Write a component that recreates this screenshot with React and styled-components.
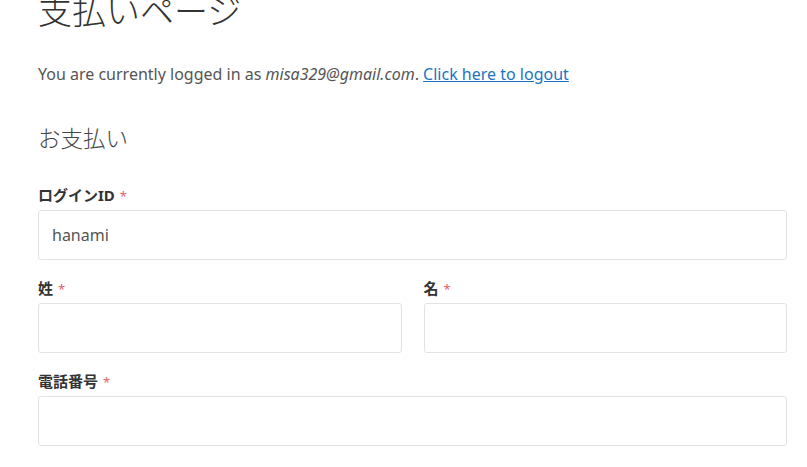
import React from 'react';
import styled, { createGlobalStyle } from 'styled-components';

const GlobalStyle = createGlobalStyle`
	html, body {
		margin: 0;
		padding: 0;
		background: #fff;
	}
	body {
		font-family: 'Noto Sans', 'Noto Sans CJK JP', sans-serif;
		color: #444;
	}
`;

const Page = styled.main`
	width: 749px;
	padding: 0 20px 0 38px;
	overflow: hidden;
	height: 467px;
`;

const Title = styled.h1`
	margin: -12px 0 0;
	font-family: 'Noto Sans CJK JP', sans-serif;
	font-weight: 300;
	font-size: 34px;
	line-height: 44px;
	color: #333;
`;

const Notice = styled.p`
	margin: 29px 0 0;
	font-size: 16px;
	line-height: 26px;
	color: #555;

	em {
		font-style: italic;
	}

	a {
		color: #1e73be;
		text-decoration: underline;
	}
`;

const Section = styled.h2`
	margin: 35px 0 0;
	font-family: 'Noto Sans CJK JP', sans-serif;
	font-weight: 300;
	font-size: 22.5px;
	line-height: 30px;
	color: #444;
`;

const Form = styled.form`
	margin-top: 33px;
	display: flex;
	flex-direction: column;
	gap: 18px;
`;

const Row = styled.div`
	display: grid;
	grid-template-columns: ${(p) => (p.$split ? '1fr 1fr' : '1fr')};
	column-gap: 22px;
`;

const Field = styled.div`
	display: flex;
	flex-direction: column;
	gap: 4px;
`;

const Label = styled.label`
	font-family: 'Noto Sans', 'Noto Sans CJK JP', sans-serif;
	font-weight: 700;
	font-size: 15px;
	line-height: 20px;
	color: #333;
`;

const Required = styled.span`
	margin-left: 5px;
	color: #e2626b;
	font-weight: 400;
	font-size: 13px;
`;

const Input = styled.input`
	box-sizing: border-box;
	width: 100%;
	height: 50px;
	padding: 0 13px;
	border: 1px solid #e3e3e3;
	border-radius: 3px;
	background: #fff;
	font-family: 'Noto Sans', sans-serif;
	font-size: 16px;
	color: #555;
	outline: none;
`;

const FormField = ({ label, value }) => (
	<Field>
		<Label>
			{label}
			<Required>*</Required>
		</Label>
		<Input defaultValue={value} />
	</Field>
);

const App = () => (
	<>
		<GlobalStyle />
		<Page>
			<Title>支払いページ</Title>
			<Notice>
				You are currently logged in as <em>misa329@gmail.com</em>.{' '}
				<a href='#logout'>Click here to logout</a>
			</Notice>
			<Section>お支払い</Section>
			<Form>
				<Row>
					<FormField label='ログインID' value='hanami' />
				</Row>
				<Row $split>
					<FormField label='姓' />
					<FormField label='名' />
				</Row>
				<Row>
					<FormField label='電話番号' />
				</Row>
			</Form>
		</Page>
	</>
);

export default App;
